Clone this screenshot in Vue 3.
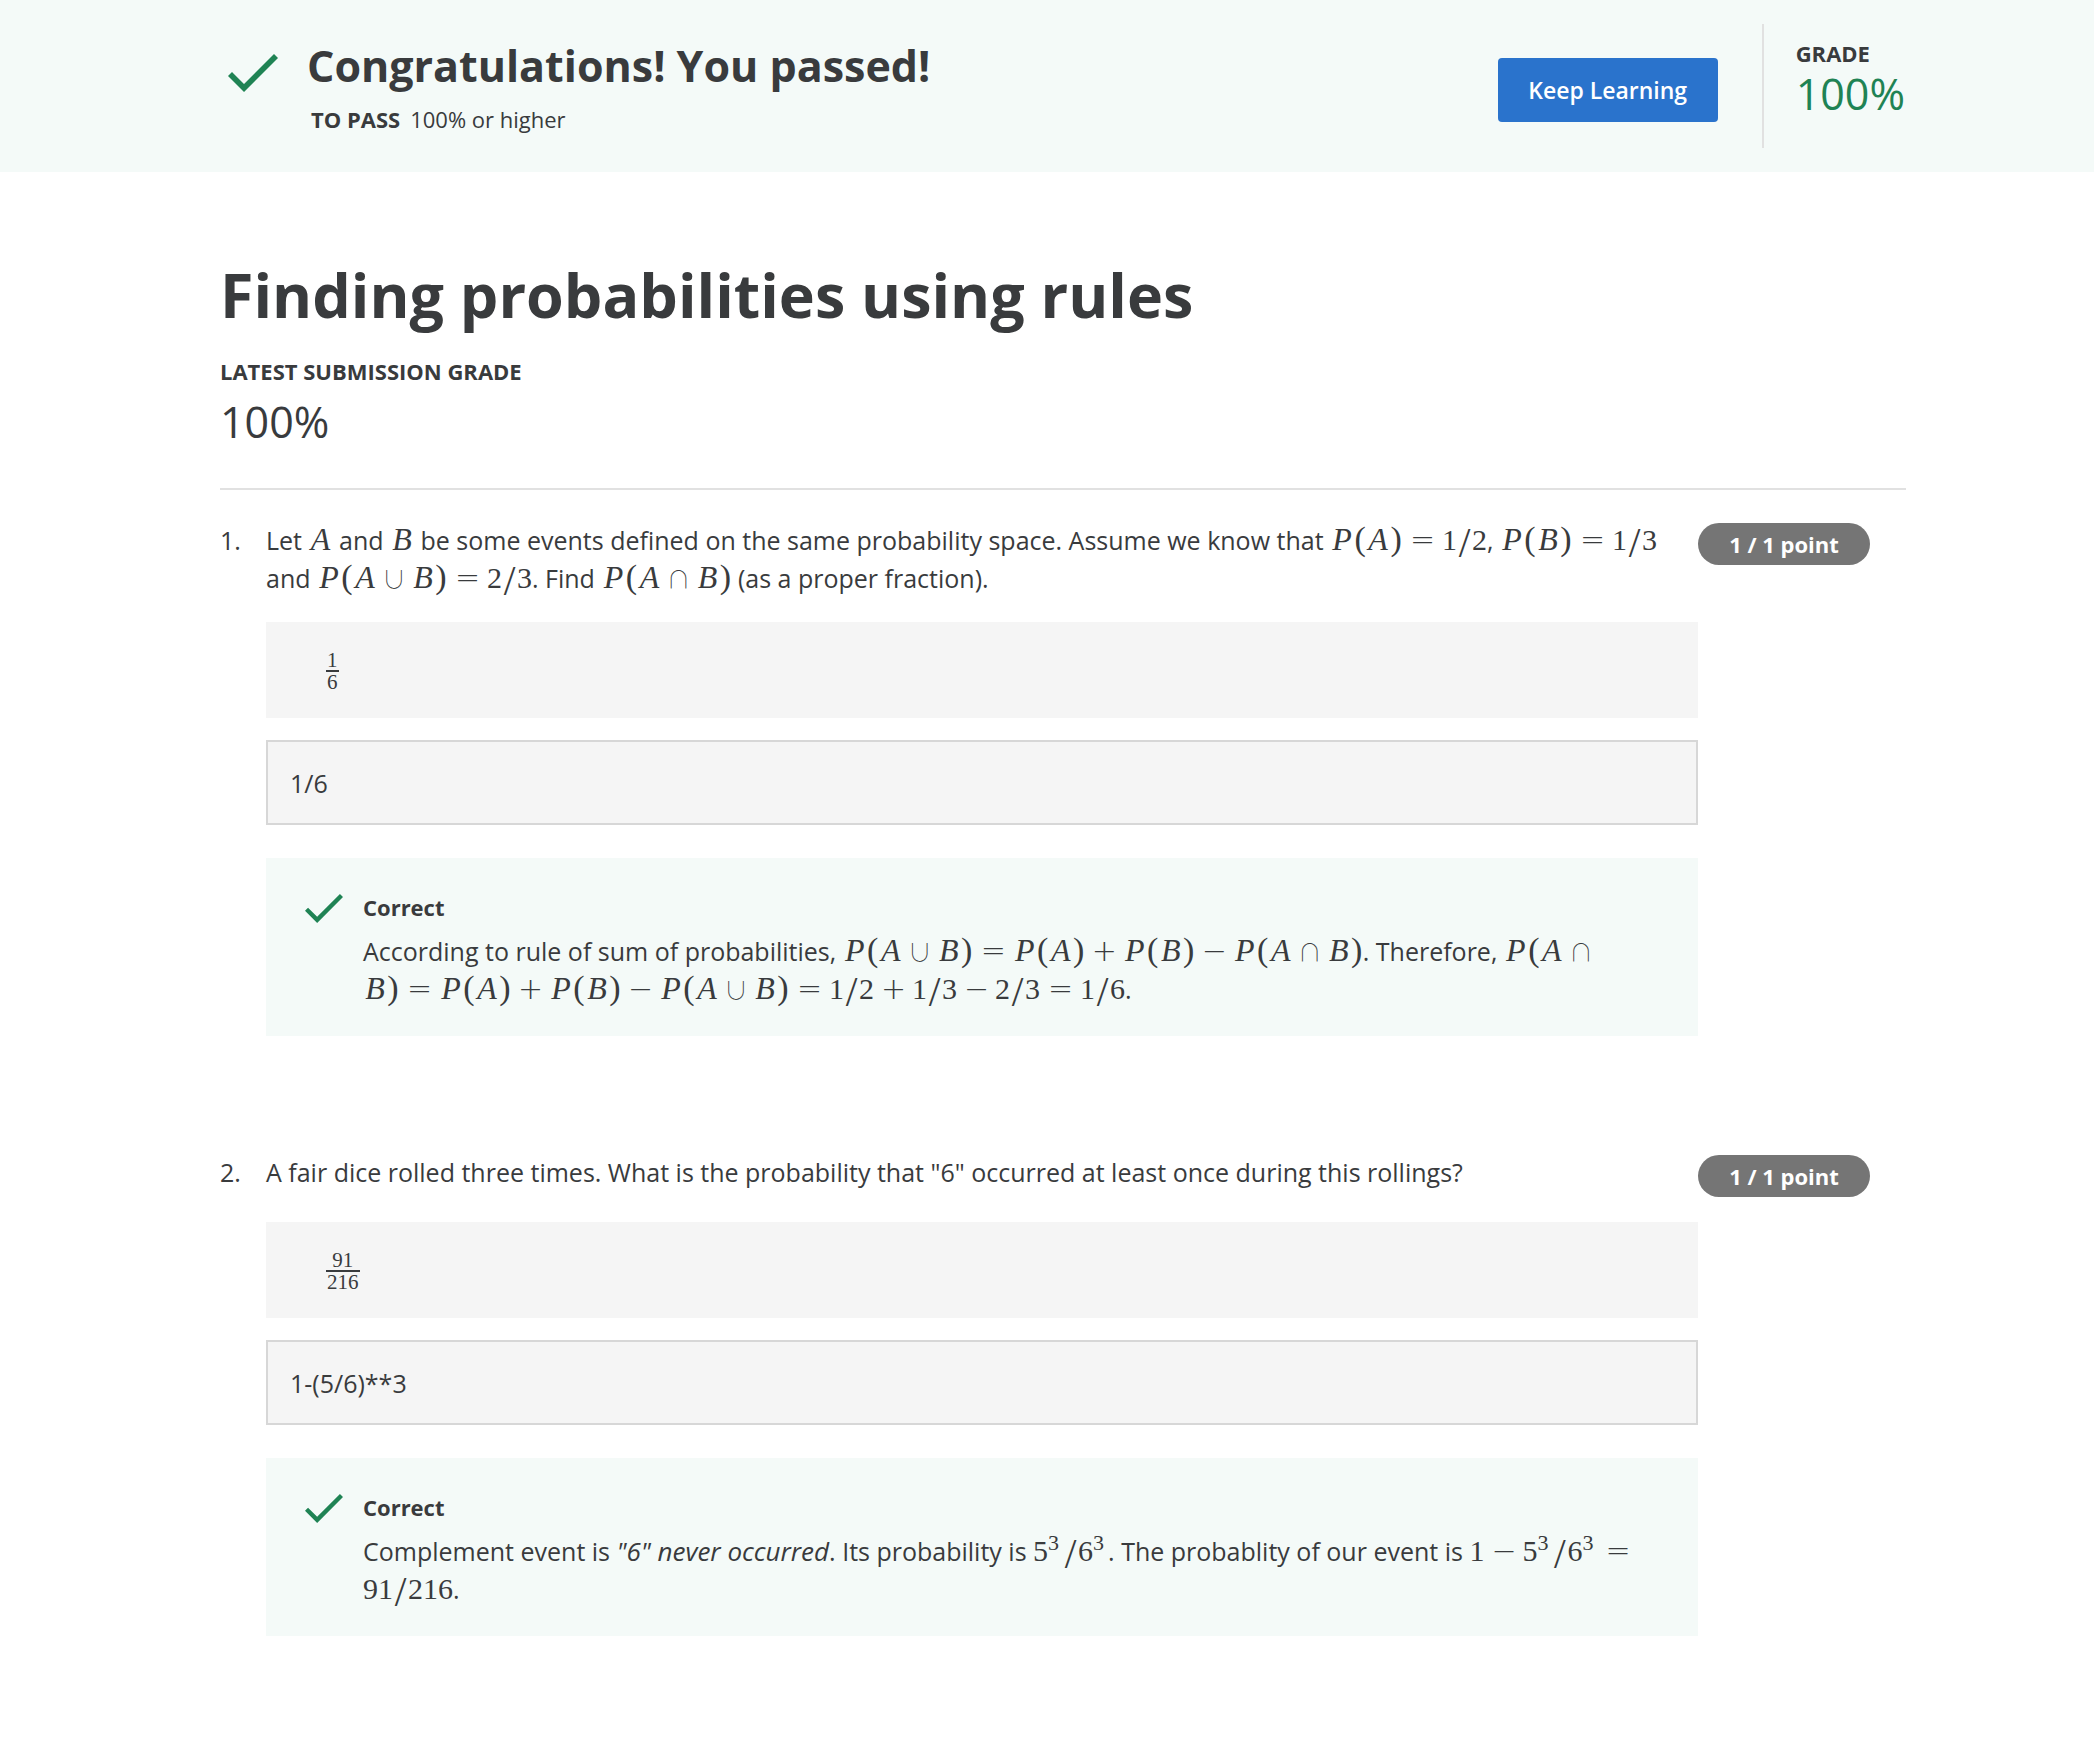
<script setup>
import { h } from 'vue'

const glyphClass = {
  P: 'var', A: 'var', B: 'var',
  '(': 'paren', ')': 'paren',
  '/': 'slash',
  '=': 'rel', '+': 'bin', '−': 'bin',
  '∪': 'set', '∩': 'set',
}

// Lays out a formula; "|" marks a permitted line break and "^" a superscript digit.
const formula = (source) =>
  source.split('|').flatMap((chunk, i) => {
    const glyphs = [...chunk.matchAll(/\^?./gu)].map(([g]) =>
      g[0] === '^'
        ? h('sup', { class: 'glyph' }, g.slice(1))
        : h('span', { class: ['glyph', glyphClass[g] || 'digit'] }, g)
    )
    const unit = h('span', { class: 'unit' }, glyphs)
    return i ? [h('wbr'), unit] : [unit]
  })

const MathText = ({ parts }) =>
  h('p', { class: 'math-text' }, parts.map((part) => {
    if (typeof part === 'string') return part
    if (part.em) return h('em', part.em)
    return h('span', { class: 'formula' }, formula(part.math))
  }))
MathText.props = ['parts']

const questions = [
  {
    id: 1,
    prompt: [
      'Let ', { math: 'A' }, ' and ', { math: 'B' },
      ' be some events defined on the same probability space. Assume we know that ',
      { math: 'P(A)=|1/2' }, ', ', { math: 'P(B)=|1/3' }, ' and ',
      { math: 'P(A∪|B)=|2/3' }, '. Find ', { math: 'P(A∩|B)' },
      ' (as a proper fraction).',
    ],
    fraction: ['1', '6'],
    answer: '1/6',
    explanation: [
      'According to rule of sum of probabilities, ',
      { math: 'P(A∪|B)=|P(A)+|P(B)−|P(A∩|B)' }, '. Therefore, ',
      { math: 'P(A∩|B)=|P(A)+|P(B)−|P(A∪|B)=|1/2+|1/3−|2/3=|1/6' }, '.',
    ],
  },
  {
    id: 2,
    prompt: ['A fair dice rolled three times. What is the probability that "6" occurred at least once during this rollings?'],
    fraction: ['91', '216'],
    answer: '1-(5/6)**3',
    explanation: [
      'Complement event is ', { em: '"6" never occurred' }, '. Its probability is ',
      { math: '5^3/6^3' }, '. The probablity of our event is ',
      { math: '1−|5^3/6^3=|91/216' }, '.',
    ],
  },
]
</script>

<template>
  <div class="page">
    <header class="banner">
      <svg class="check" viewBox="0 0 50 38" aria-hidden="true">
        <path d="M4 18 0 22 16 38 50 4 46 0 16 30Z" />
      </svg>
      <div class="result">
        <h2>Congratulations! You passed!</h2>
        <p class="to-pass"><strong>TO PASS</strong><span>100% or higher</span></p>
      </div>
      <button type="button" class="keep">Keep Learning</button>
      <div class="grade">
        <strong>GRADE</strong>
        <span class="score">100%</span>
      </div>
    </header>

    <main class="content">
      <h1>Finding probabilities using rules</h1>
      <div class="latest">
        <strong>LATEST SUBMISSION GRADE</strong>
        <span class="score">100%</span>
      </div>

      <section v-for="q in questions" :key="q.id" class="question">
        <span class="number">{{ q.id }}.</span>
        <div class="body">
          <MathText class="prompt" :parts="q.prompt" />
          <div class="preview">
            <span class="fraction">
              <span>{{ q.fraction[0] }}</span>
              <span class="denominator">{{ q.fraction[1] }}</span>
            </span>
          </div>
          <input type="text" class="answer" :value="q.answer" :aria-label="`Answer to question ${q.id}`" readonly />
          <div class="feedback">
            <svg class="check small" viewBox="0 0 50 38" aria-hidden="true">
              <path d="M4 18 0 22 16 38 50 4 46 0 16 30Z" />
            </svg>
            <div class="explanation">
              <strong>Correct</strong>
              <MathText :parts="q.explanation" />
            </div>
          </div>
        </div>
        <div class="points"><span class="badge">1 / 1 point</span></div>
      </section>
    </main>
  </div>
</template>

<style>
body {
  margin: 0;
  background: #fff;
}
</style>

<style scoped>
.page {
  color: #393b3d;
  font-family: "Open Sans", sans-serif;
  font-size: 25px;
  line-height: 38px;
}
h1, h2, p {
  margin: 0;
}
strong {
  display: block;
  font-size: 22px;
  line-height: 28px;
  font-weight: 700;
}
.banner {
  display: flex;
  align-items: flex-start;
  padding: 24px 189px 24px 220px;
  background: #f4faf8;
}
.check {
  flex: none;
  width: 50px;
  height: 38px;
  margin: 30px 29px 0 8px;
  fill: #1f8354;
}
.check.small {
  width: 38px;
  height: 29px;
  margin: 1px 20px 0 0;
}
.result {
  flex: 1;
  padding-top: 17px;
}
h2 {
  font-size: 43px;
  line-height: 50px;
}
.to-pass {
  display: flex;
  gap: 10px;
  margin: 14px 0 0 4px;
  font-size: 22px;
  line-height: 28px;
}
.keep {
  width: 220px;
  height: 64px;
  margin: 34px 44px 0 0;
  padding: 0;
  border: 0;
  border-radius: 4px;
  background: #2a73cc;
  color: #fff;
  font: 600 23px/30px "Open Sans", sans-serif;
}
.grade {
  box-sizing: border-box;
  display: flex;
  flex-direction: column;
  gap: 2px;
  min-height: 124px;
  padding: 15px 0 0 32px;
  border-left: 2px solid #e1e1e1;
}
.score {
  display: block;
  font-size: 43px;
  line-height: 50px;
}
.grade .score {
  color: #1f8354;
}
.content {
  padding: 81px 188px 106px 220px;
}
h1 {
  font-size: 61px;
  line-height: 84px;
}
.latest {
  display: flex;
  flex-direction: column;
  gap: 12px;
  padding: 20px 0 41px;
  border-bottom: 2px solid #e1e1e1;
}
.question {
  display: flex;
  padding-top: 31px;
}
.question + .question {
  padding-top: 117px;
}
.number {
  flex: none;
  width: 46px;
}
.body {
  flex: 1;
  min-width: 0;
}
.prompt {
  min-height: 44px;
}
.preview {
  margin-top: 25px;
  padding: 28px 60px 26px;
  background: #f5f5f5;
  line-height: 20px;
}
.fraction {
  display: inline-flex;
  flex-direction: column;
  vertical-align: top;
  font-family: "Liberation Serif", serif;
  font-size: 21px;
  text-align: center;
}
.denominator {
  padding: 0 1px;
  border-top: 2px solid #393b3d;
}
.answer {
  display: block;
  box-sizing: border-box;
  width: 100%;
  height: 85px;
  margin-top: 22px;
  padding: 0 22px;
  border: 2px solid #d7d7d7;
  border-radius: 0;
  background: #f5f5f5;
  color: inherit;
  font: inherit;
}
.feedback {
  display: flex;
  margin-top: 33px;
  padding: 35px 44px 28px 39px;
  background: #f4faf8;
}
.explanation {
  flex: 1;
  display: flex;
  flex-direction: column;
  gap: 11px;
}
.points {
  flex: none;
  width: 208px;
}
.badge {
  display: block;
  width: 172px;
  margin-top: 2px;
  border-radius: 22px;
  background: #757575;
  color: #fff;
  font-size: 22px;
  font-weight: 700;
  line-height: 42px;
  text-align: center;
}

:deep(em) {
  font-size: 26px;
  line-height: 0;
}
:deep(.formula) {
  font-family: "Liberation Serif", serif;
  font-size: 30px;
  line-height: 0;
}
:deep(.unit) {
  white-space: nowrap;
}
:deep(.glyph) {
  display: inline-block;
  width: 15px;
  line-height: 0;
  text-align: center;
}
:deep(.var) {
  width: 24px;
  font-size: 32px;
  font-style: italic;
}
:deep(.paren) {
  width: 12px;
  font-size: 34px;
}
:deep(.slash) {
  font-size: 42px;
  vertical-align: -7px;
}
:deep(.rel),
:deep(.bin) {
  width: 24px;
  margin: 0 7px;
  font-family: "DejaVu Sans", sans-serif;
  font-weight: 200;
  font-size: 30px;
}
:deep(.rel) {
  margin: 0 8px;
}
:deep(.set) {
  width: 24px;
  margin: 0 5px;
  font-family: "Noto Sans CJK JP", sans-serif;
  font-weight: 100;
  font-size: 24px;
}
:deep(sup.glyph) {
  font-size: 22px;
  vertical-align: 11px;
  text-align: left;
}
</style>
